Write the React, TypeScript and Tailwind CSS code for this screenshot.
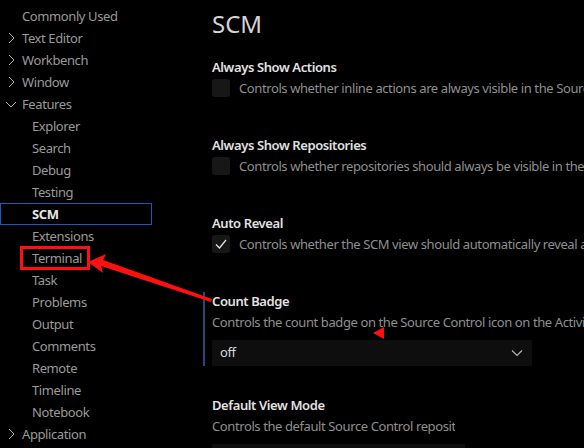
import React from 'react';

// Sidebar tree data
interface NavItem {
  label: string;
  level: 1 | 2;
  chevron?: 'right' | 'down';
  active?: boolean;
  marked?: boolean;
}

const navItems: NavItem[] = [
  { label: 'Commonly Used', level: 1 },
  { label: 'Text Editor', level: 1, chevron: 'right' },
  { label: 'Workbench', level: 1, chevron: 'right' },
  { label: 'Window', level: 1, chevron: 'right' },
  { label: 'Features', level: 1, chevron: 'down' },
  { label: 'Explorer', level: 2 },
  { label: 'Search', level: 2 },
  { label: 'Debug', level: 2 },
  { label: 'Testing', level: 2 },
  { label: 'SCM', level: 2, active: true },
  { label: 'Extensions', level: 2 },
  { label: 'Terminal', level: 2, marked: true },
  { label: 'Task', level: 2 },
  { label: 'Problems', level: 2 },
  { label: 'Output', level: 2 },
  { label: 'Comments', level: 2 },
  { label: 'Remote', level: 2 },
  { label: 'Timeline', level: 2 },
  { label: 'Notebook', level: 2 },
  { label: 'Application', level: 1, chevron: 'right' },
];

const Chevron: React.FC<{ dir: 'right' | 'down' }> = ({ dir }) => (
  <svg width="12" height="12" viewBox="0 0 12 12" className="absolute left-[5px] top-[5px]">
    {dir === 'right' ? (
      <path d="M4 1 L9 6 L4 11" fill="none" stroke="#b0b0b0" strokeWidth="1" />
    ) : (
      <path d="M1 4 L6 9 L11 4" fill="none" stroke="#b0b0b0" strokeWidth="1" />
    )}
  </svg>
);

const Sidebar: React.FC = () => (
  <div className="w-[152px] shrink-0 pt-[5px]">
    {navItems.map((item) => (
      <div
        key={item.label}
        className={
          'relative h-[22px] leading-[22px] ' +
          (item.active ? 'outline outline-1 -outline-offset-1 outline-[#1a5bb5] ' : '')
        }
      >
        {item.chevron && <Chevron dir={item.chevron} />}
        <span
          className={
            (item.level === 1 ? 'ml-[22px] ' : 'ml-[32px] ') +
            (item.active ? 'font-bold text-[#e6e6e6] ' : 'text-[#9a9a9a] ') +
            (item.marked ? 'relative ' : '')
          }
        >
          {item.label}
          {item.marked && (
            <span className="absolute -left-[12px] -top-[3px] w-[70px] h-[24px] border-[3px] border-[#ff1010]" />
          )}
        </span>
      </div>
    ))}
  </div>
);

const Checkbox: React.FC<{ checked?: boolean }> = ({ checked }) => (
  <div className="w-[18px] h-[18px] rounded-[3px] bg-[#171717] shrink-0 flex items-center justify-center mt-[1px]">
    {checked && (
      <svg width="14" height="14" viewBox="0 0 14 14">
        <path d="M2 7.5 L5.5 11 L12 3" fill="none" stroke="#e8e8e8" strokeWidth="1.2" />
      </svg>
    )}
  </div>
);

const ChevronDown: React.FC = () => (
  <svg width="12" height="8" viewBox="0 0 12 8">
    <path d="M1 1.5 L6 6.5 L11 1.5" fill="none" stroke="#b8b8b8" strokeWidth="1.1" />
  </svg>
);

const CheckSetting: React.FC<{ title: string; desc: string; checked?: boolean }> = ({ title, desc, checked }) => (
  <div className="pl-[9px] h-[78px]">
    <div className="font-semibold text-[#e2e2e2] h-[20px] leading-[18px]">{title}</div>
    <div className="flex gap-[9px] items-start whitespace-nowrap">
      <Checkbox checked={checked} />
      <span className="text-[#8f8f8f] leading-[20px]">{desc}</span>
    </div>
  </div>
);

const App: React.FC = () => (
  <div
    className="relative w-[584px] h-[448px] overflow-hidden bg-black text-[13px] tracking-[-0.4px] flex"
    style={{ fontFamily: '"Noto Sans", "Open Sans", sans-serif' }}
  >
    <Sidebar />

    <div className="flex-1 pl-[51px] overflow-hidden">
      <div className="pl-[9px] pt-[8px] h-[58px] text-[24px] tracking-normal text-[#d4d4d4] leading-[32px]">SCM</div>

      <CheckSetting title="Always Show Actions" desc="Controls whether inline actions are always visible in the Source Control view." />
      <CheckSetting title="Always Show Repositories" desc="Controls whether repositories should always be visible in the Source Control view." />
      <CheckSetting title="Auto Reveal" desc="Controls whether the SCM view should automatically reveal and select files when opening them." checked />

      <div className="border-l-2 border-[#1a4e7a] pl-[7px] h-[74px]">
        <div className="font-semibold text-[#e2e2e2] h-[20px] leading-[18px]">Count Badge</div>
        <div className="text-[#8f8f8f] leading-[20px] whitespace-nowrap">
          Controls the count badge on the Source Control icon on the Activity Bar.
        </div>
        <div className="mt-[8px] w-[320px] h-[26px] bg-[#0e0e0e] flex items-center justify-between pl-[8px] pr-[9px]">
          <span className="text-[#d8d8d8]">off</span>
          <ChevronDown />
        </div>
      </div>

      <div className="pl-[9px] pt-[30px]">
        <div className="font-semibold text-[#e2e2e2] h-[20px] leading-[18px]">Default View Mode</div>
        <div className="w-[243px] overflow-hidden text-[#8f8f8f] leading-[20px] whitespace-nowrap">
          Controls the default Source Control repository view mode.
        </div>
        <div className="mt-[8px] w-[253px] h-[26px] bg-[#0e0e0e]" />
      </div>
    </div>

    {/* annotation arrows */}
    <svg className="absolute left-0 top-0 pointer-events-none" width="584" height="448">
      <polygon points="88,262 106,254 103,260 212,299 211,302 101,266 103,273" fill="#ff1010" />
      <polygon points="373,333 384,327 384,339" fill="#ff1010" />
    </svg>
  </div>
);

export default App;
